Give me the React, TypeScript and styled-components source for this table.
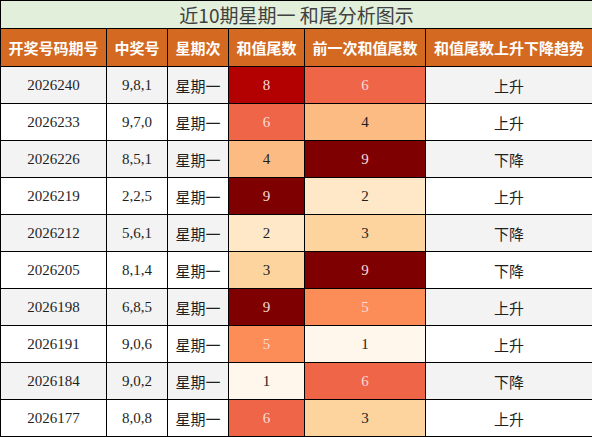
import React from "react";
import styled, { createGlobalStyle } from "styled-components";

const Global = createGlobalStyle`
  html, body { margin: 0; padding: 0; background: #ffffff; }
  #root { width: 592px; }
`;

const OrRd = ["#fff7ec", "#fff7ec", "#fee8c8", "#fdd49e", "#fdbb84", "#fc8d59", "#ef6548", "#d7301f", "#b30000", "#7f0000"];

const Table = styled.table`
  border-collapse: collapse;
  width: 592px;
  table-layout: fixed;
  border: 1px solid #000;
`;

const TitleCell = styled.th`
  height: 27px;
  padding: 0;
  background: #e2efda;
  color: #404040;
  font-family: "Noto Sans CJK SC", "Noto Sans", sans-serif;
  font-weight: 400;
  font-size: 19px;
  line-height: 27px;
  text-align: center;
  border: 1px solid #000;
`;

const HeadCell = styled.th`
  height: 37px;
  padding: 0;
  background: #d46a22;
  color: #ffffff;
  font-family: "Noto Sans CJK SC", "Noto Sans", sans-serif;
  font-weight: 700;
  font-size: 15px;
  text-align: center;
  border: 1px solid #000;
  white-space: nowrap;
`;

const Cell = styled.td<{ $bg: string; $serif?: boolean; $fg?: string }>`
  height: 36px;
  padding: 0;
  background: ${(p) => p.$bg};
  color: ${(p) => p.$fg || "#1f1f1f"};
  font-family: ${(p) =>
    p.$serif ? '"Liberation Serif", "Noto Sans CJK SC", serif' : '"Noto Sans CJK SC", "Noto Sans", sans-serif'};
  font-size: ${(p) => (p.$serif ? "15px" : "15px")};
  text-align: center;
  border: 1px solid #000;
  white-space: nowrap;
`;

const HeatCell = ({ v, zebra }: { v: number; zebra: string }) => {
  void zebra;
  const dark = v >= 5;
  return (
    <Cell $bg={OrRd[v]} $serif $fg={dark ? "#f6dcd6" : "#1f1f1f"}>
      {v}
    </Cell>
  );
};

const rows = [
  ["2026240", "9,8,1", 8, 6, "上升"],
  ["2026233", "9,7,0", 6, 4, "上升"],
  ["2026226", "8,5,1", 4, 9, "下降"],
  ["2026219", "2,2,5", 9, 2, "上升"],
  ["2026212", "5,6,1", 2, 3, "下降"],
  ["2026205", "8,1,4", 3, 9, "下降"],
  ["2026198", "6,8,5", 9, 5, "上升"],
  ["2026191", "9,0,6", 5, 1, "上升"],
  ["2026184", "9,0,2", 1, 6, "下降"],
  ["2026177", "8,0,8", 6, 3, "上升"],
] as const;

const widths = [106, 61, 61, 76, 121, 167];

export default function App() {
  return (
    <>
      <Global />
      <Table>
        <colgroup>
          {widths.map((w, i) => (
            <col key={i} style={{ width: w }} />
          ))}
        </colgroup>
        <thead>
          <tr>
            <TitleCell colSpan={6}>近10期星期一 和尾分析图示</TitleCell>
          </tr>
          <tr>
            <HeadCell>开奖号码期号</HeadCell>
            <HeadCell>中奖号</HeadCell>
            <HeadCell>星期次</HeadCell>
            <HeadCell>和值尾数</HeadCell>
            <HeadCell>前一次和值尾数</HeadCell>
            <HeadCell>和值尾数上升下降趋势</HeadCell>
          </tr>
        </thead>
        <tbody>
          {rows.map((r, i) => {
            const zebra = i % 2 === 0 ? "#f3f3f3" : "#ffffff";
            return (
              <tr key={r[0]}>
                <Cell $bg={zebra} $serif>{r[0]}</Cell>
                <Cell $bg={zebra} $serif>{r[1]}</Cell>
                <Cell $bg={zebra}>星期一</Cell>
                <HeatCell v={r[2]} zebra={zebra} />
                <HeatCell v={r[3]} zebra={zebra} />
                <Cell $bg={zebra}>{r[4]}</Cell>
              </tr>
            );
          })}
        </tbody>
      </Table>
    </>
  );
}
